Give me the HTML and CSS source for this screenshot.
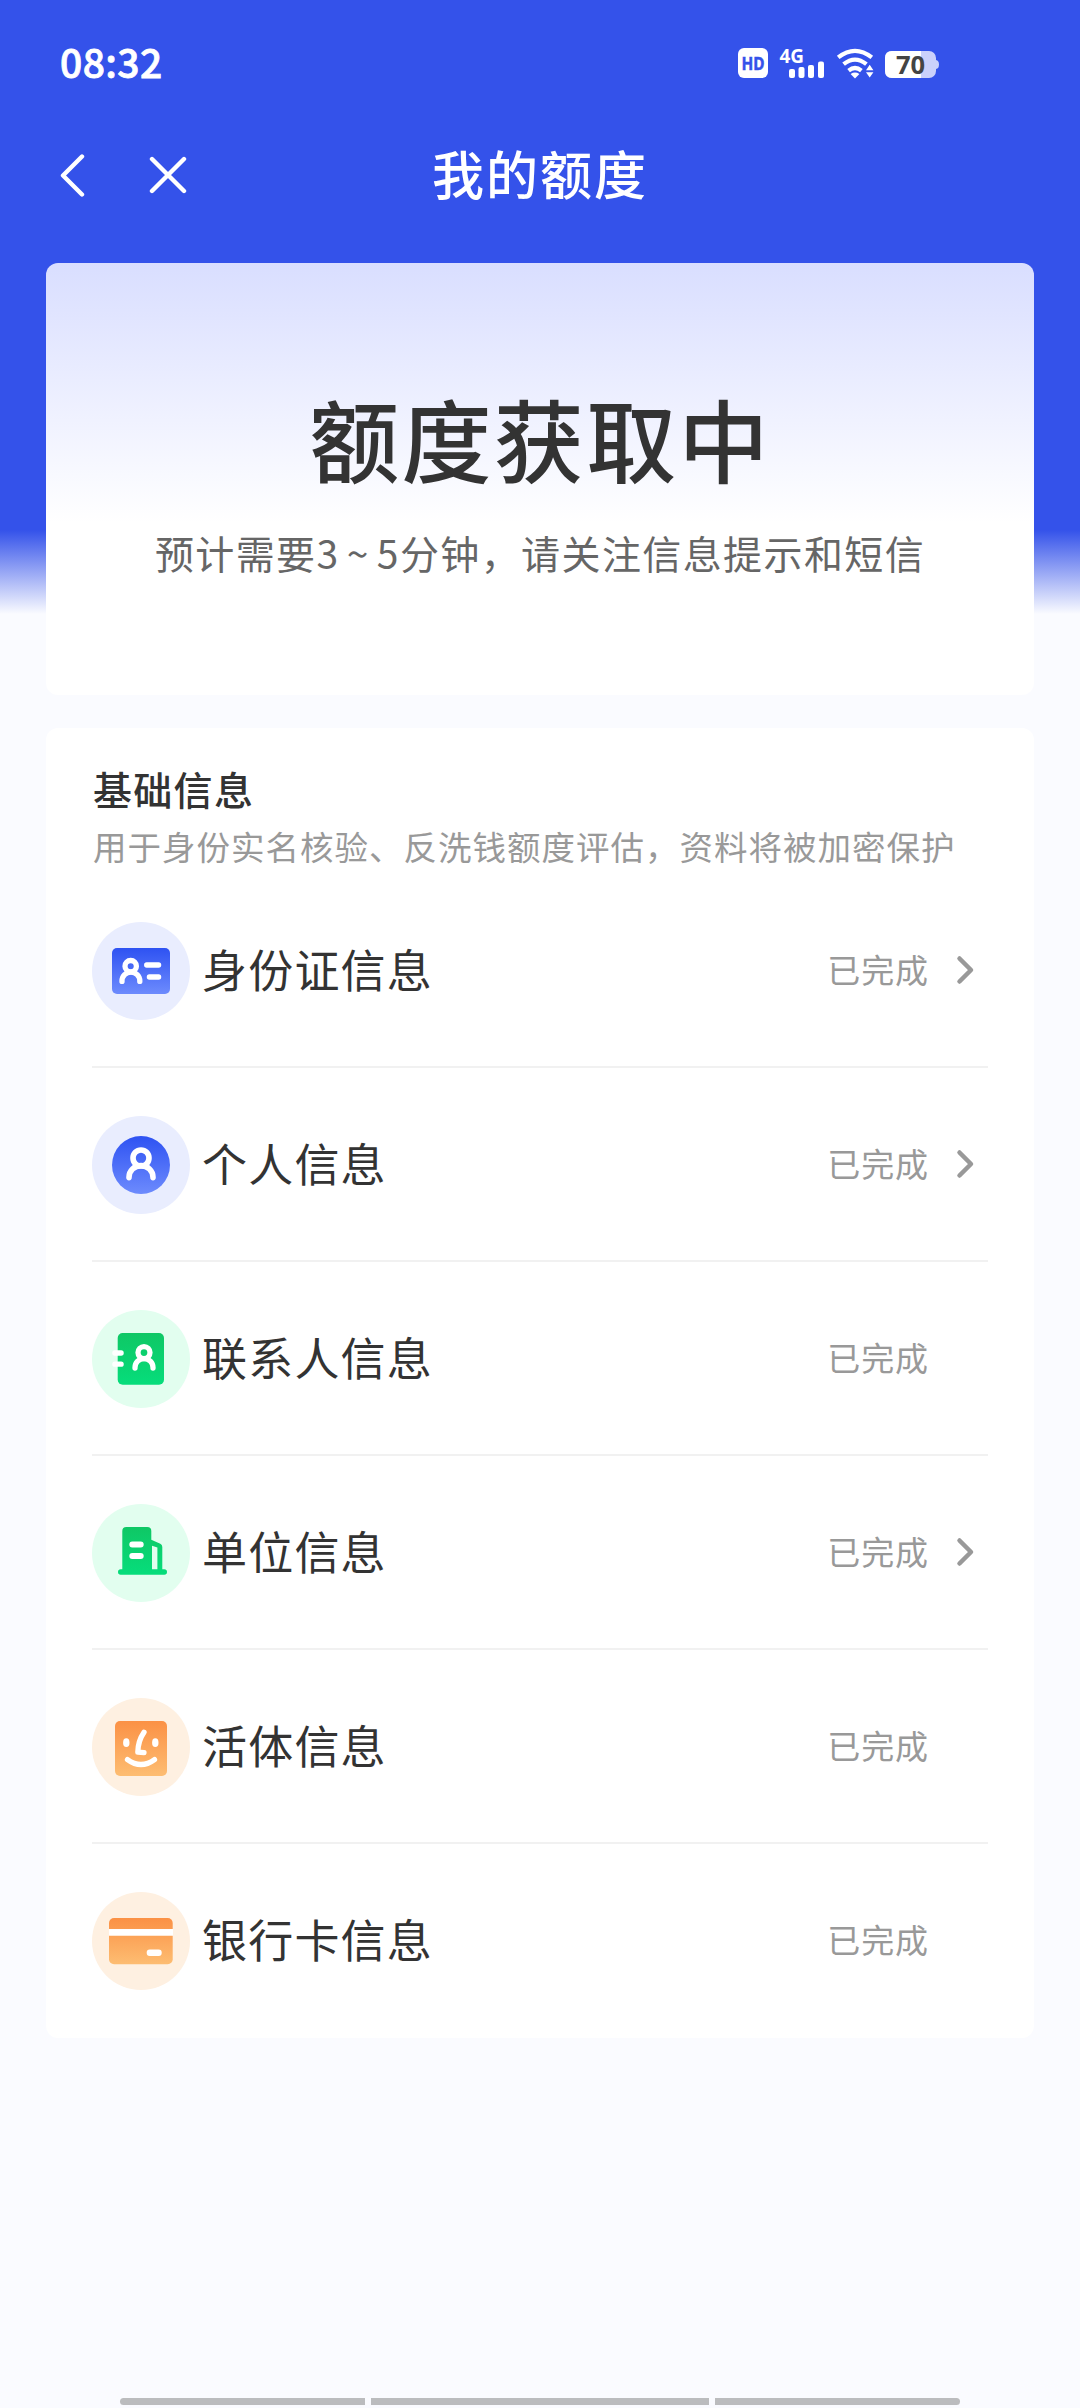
FILE: index.html
```html
<!DOCTYPE html>
<html lang="zh-CN">
<head>
<meta charset="utf-8">
<title>我的额度</title>
<link rel="stylesheet" href="styles.css">
</head>
<body>
<svg class="defs" width="0" height="0" aria-hidden="true">
  <defs>
    <linearGradient id="blue" x1="0" y1="0" x2="0" y2="1"><stop offset="0" stop-color="#2e52f2"/><stop offset="1" stop-color="#6d8bfd"/></linearGradient>
    <linearGradient id="green" x1="0" y1="0" x2="0" y2="1"><stop offset="0" stop-color="#0fc765"/><stop offset="1" stop-color="#06dd7b"/></linearGradient>
    <linearGradient id="orange" x1="0" y1="0" x2="0" y2="1"><stop offset="0" stop-color="#fb9145"/><stop offset="1" stop-color="#fdbd72"/></linearGradient>
  </defs>
</svg>
<div class="page">
  <div class="statusbar">
    <span class="time">08:32</span>
    <div class="indicators">
      <svg width="202" height="54" viewBox="737 36 202 54" fill="#fff">
        <rect x="738" y="48" width="30" height="30" rx="6"/>
        <text class="hd-text" x="741.500" y="69.500" textLength="23" lengthAdjust="spacingAndGlyphs">HD</text>
        <text class="net-text" x="779.500" y="62.500" textLength="24.500" lengthAdjust="spacingAndGlyphs">4G</text>
        <rect x="789" y="69" width="6" height="9" rx="2"/>
        <rect x="798.500" y="67" width="6" height="11" rx="2"/>
        <rect x="808" y="65" width="6" height="13" rx="2"/>
        <rect x="818" y="61.500" width="6" height="16.500" rx="2"/>
        <g fill="none" stroke="#fff" stroke-width="4.200">
          <path d="M838.200 57.400Q855 44.400 871.800 57.400"/>
          <path d="M843.600 64.200Q855 55 866.400 64.200"/>
          <path d="M848.600 70.600Q855 65.400 861.400 70.600"/>
        </g>
        <path d="M850.600 73.900Q855 71.300 859.400 73.900L855 78.500Z"/>
        <path d="M866 70.300l3.700-5.500 3.700 5.500zM866 72.300h7.400l-3.700 5.200z"/>
        <path d="M936 60q3 .5 3 4.500t-3 4.500z" fill="#cbd1fb"/>
        <rect x="885" y="51" width="51" height="27" rx="7" fill="#cbd1fb"/>
        <path d="M921 51h-29q-7 0-7 7v13q0 7 7 7h29z"/>
        <text class="battery-text" x="910.500" y="73.500">70</text>
      </svg>
    </div>
  </div>

  <header class="navbar">
    <div class="nav-actions">
      <svg width="26" height="44" viewBox="0 0 26 44"><path d="M23 3.500L4 22.500l19 19"/></svg>
      <svg width="38" height="38" viewBox="0 0 38 38"><path d="M3 3l32 32M35 3L3 35"/></svg>
    </div>
    <h1 class="nav-title">我的额度</h1>
  </header>

  <section class="card quota">
    <h2 class="quota-title">额度获取中</h2>
    <p class="quota-tip">预计需要3 ~ 5分钟，请关注信息提示和短信</p>
  </section>

  <section class="card info">
    <h3 class="info-title">基础信息</h3>
    <p class="info-desc">用于身份实名核验、反洗钱额度评估，资料将被加密保护</p>
    <ul class="rows">
      <li class="row">
        <svg class="icon" viewBox="0 0 98 98">
          <circle cx="49" cy="49" r="49" fill="#e9edfe"/>
          <rect x="20" y="26" width="58" height="46" rx="5" fill="url(#blue)"/>
          <g fill="none" stroke="#fff" stroke-width="5.300" stroke-linecap="round"><circle cx="38.700" cy="44.200" r="5.700"/><path d="M30 59.400v-.4a8.900 8.900 0 0 1 17.800 0v.4M54.700 43H66.600M57.400 55H66.600"/></g>
        </svg>
        <span class="label">身份证信息</span><span class="state">已完成</span>
        <svg class="arrow" viewBox="0 0 20 30"><path d="M3.500 3.500L15 15 3.500 26.500"/></svg>
      </li>
      <li class="row">
        <svg class="icon" viewBox="0 0 98 98">
          <circle cx="49" cy="49" r="49" fill="#e9edfe"/>
          <circle cx="49" cy="49" r="29" fill="url(#blue)"/>
          <g fill="none" stroke="#fff" stroke-width="5.600" stroke-linecap="round"><circle cx="49" cy="42" r="8"/><path d="M37 61.600v-.4a12 11.600 0 0 1 24 0v.4"/></g>
        </svg>
        <span class="label">个人信息</span><span class="state">已完成</span>
        <svg class="arrow" viewBox="0 0 20 30"><path d="M3.500 3.500L15 15 3.500 26.500"/></svg>
      </li>
      <li class="row">
        <svg class="icon" viewBox="0 0 98 98">
          <circle cx="49" cy="49" r="49" fill="#e2feef"/>
          <rect x="25.700" y="23" width="46.300" height="51.700" rx="5" fill="url(#green)"/>
          <g fill="none" stroke="#fff" stroke-width="5.300" stroke-linecap="round"><circle cx="52" cy="42.600" r="6"/><path d="M43 58v-.4a9 9 0 0 1 18 0v.4M22.900 43H29.100M22.900 54.200H29.100"/></g>
        </svg>
        <span class="label">联系人信息</span><span class="state">已完成</span>
        <span class="arrow"></span>
      </li>
      <li class="row">
        <svg class="icon" viewBox="0 0 98 98">
          <circle cx="49" cy="49" r="49" fill="#e2feef"/>
          <path fill="url(#green)" fill-rule="evenodd" d="M34.300 23h21q4 0 4 4v8.800l9 4q2 1 2 3.200v22.300h2a2.700 2.700 0 0 1 0 5.400H28.700a2.700 2.700 0 0 1 0-5.400h1.600V27q0-4 4-4zM60 41.800v23.500h5.400V43.600z"/>
          <path d="M40.300 40.500H48.700M40.300 51.900H48.700" stroke="#fff" stroke-width="6" stroke-linecap="round"/>
        </svg>
        <span class="label">单位信息</span><span class="state">已完成</span>
        <svg class="arrow" viewBox="0 0 20 30"><path d="M3.500 3.500L15 15 3.500 26.500"/></svg>
      </li>
      <li class="row">
        <svg class="icon" viewBox="0 0 98 98">
          <circle cx="49" cy="49" r="49" fill="#fef0e1"/>
          <rect x="23" y="23" width="52" height="55" rx="5" fill="url(#orange)"/>
          <g fill="#fff"><ellipse cx="34.300" cy="44.700" rx="3.200" ry="4.400"/><ellipse cx="63.300" cy="44.700" rx="3.200" ry="4.400"/></g>
          <path d="M52 34.300Q46 43 45.800 54.200L52 54.700M35.500 61.600Q49 71.500 62.500 61.600" fill="none" stroke="#fff" stroke-width="5.300" stroke-linecap="round" stroke-linejoin="round"/>
        </svg>
        <span class="label">活体信息</span><span class="state">已完成</span>
        <span class="arrow"></span>
      </li>
      <li class="row">
        <svg class="icon" viewBox="0 0 98 98">
          <circle cx="49" cy="49" r="49" fill="#fef0e1"/>
          <rect x="17" y="26" width="63.700" height="46.300" rx="5" fill="url(#orange)"/>
          <path d="M17 37h64v6.700H17z" fill="#fff"/>
          <rect x="54.700" y="57.600" width="15" height="6.400" rx="3" fill="#fff"/>
        </svg>
        <span class="label">银行卡信息</span><span class="state">已完成</span>
        <span class="arrow"></span>
      </li>
    </ul>
  </section>

  <div class="sysbar"><i></i><i></i><i></i></div>
</div>
</body>
</html>
```
FILE: styles.css
```css
* { box-sizing: border-box; margin: 0; padding: 0; }

body {
  font-family: "Noto Sans CJK SC", sans-serif;
  color: #333;
  background: #fafbff;
}

.defs { display: block; height: 0; }

.page {
  display: flex;
  flex-direction: column;
  width: 1080px;
  height: 2408px;
  background: linear-gradient(#3452ea 0, #3452ea 530px, #fafbff 614px);
}

.statusbar {
  display: flex;
  align-items: center;
  justify-content: space-between;
  height: 126px;
  padding: 0 141px 0 60px;
}

.time {
  margin-bottom: 4px;
  color: #fff;
  font-size: 39px;
  font-weight: 500;
  letter-spacing: 0.4px;
  -webkit-text-stroke: 0.8px #fff;
}

.indicators svg { display: block; }

.hd-text, .net-text, .battery-text { font-family: "Noto Sans", sans-serif; font-weight: 700; }
.hd-text { font-size: 18.5px; fill: #3452ea; stroke: #3452ea; stroke-width: 0.5px; }
.net-text { font-size: 20px; }
.battery-text { font-size: 25.5px; fill: #444; text-anchor: middle; }

.navbar {
  display: grid;
  grid-template-columns: 1fr auto 1fr;
  align-items: center;
  height: 98px;
  padding: 0 58px;
}

.nav-actions {
  display: flex;
  align-items: center;
  gap: 64px;
  padding-left: 1px;
}

.nav-actions path {
  fill: none;
  stroke: #fff;
  stroke-width: 4.4;
  stroke-linecap: round;
  stroke-linejoin: round;
}

.nav-title {
  margin-bottom: 4px;
  color: #fff;
  font-size: 52px;
  font-weight: 500;
  line-height: 76px;
  letter-spacing: 2px;
}

.card {
  margin: 0 46px;
  border-radius: 12px;
  background: #fff;
}

.quota {
  height: 432px;
  margin-top: 39px;
  padding-top: 117px;
  text-align: center;
  background: linear-gradient(#d9deff 0, #fff 260px);
}

.quota-title {
  font-size: 90px;
  font-weight: 500;
  line-height: 114px;
  letter-spacing: 2.3px;
}

.quota-tip {
  margin-top: 28px;
  color: #666;
  font-size: 39px;
  line-height: 60px;
  letter-spacing: 1.4px;
  word-spacing: -3px;
}

.info {
  height: 1310px;
  margin-top: 33px;
  padding: 33px 46px 0 47px;
}

.info-title {
  font-size: 39px;
  font-weight: 500;
  line-height: 54px;
  letter-spacing: 1.3px;
}

.info-desc {
  margin: 6px 0 3px;
  color: #999;
  font-size: 33.5px;
  line-height: 50px;
  letter-spacing: 1px;
  white-space: nowrap;
}

.rows { margin-left: -1px; list-style: none; }

.row {
  display: flex;
  align-items: center;
  height: 194px;
  border-bottom: 2px solid #f1f1f1;
}

.row:last-child { border-bottom-color: transparent; }

.icon { width: 98px; height: 98px; margin-top: 2px; }

.label {
  flex: 1;
  margin: 0 0 3px 12px;
  font-size: 45px;
  line-height: 66px;
  letter-spacing: 1.2px;
}

.state {
  margin-bottom: 3px;
  color: #999;
  font-size: 33px;
  line-height: 50px;
  letter-spacing: 0.9px;
}

.arrow { width: 20px; height: 30px; margin: 0 12px 0 27px; }

.arrow path {
  fill: none;
  stroke: #999;
  stroke-width: 4.5;
  stroke-linecap: round;
  stroke-linejoin: round;
}

.sysbar {
  display: grid;
  grid-template-columns: 245px 338px 245px;
  gap: 6px;
  height: 7px;
  margin: auto 120px 3px;
}

.sysbar i { background: #bbbcbe; }
.sysbar i:first-child { border-radius: 4px 0 0 4px; }
.sysbar i:last-child { border-radius: 0 4px 4px 0; }
```
